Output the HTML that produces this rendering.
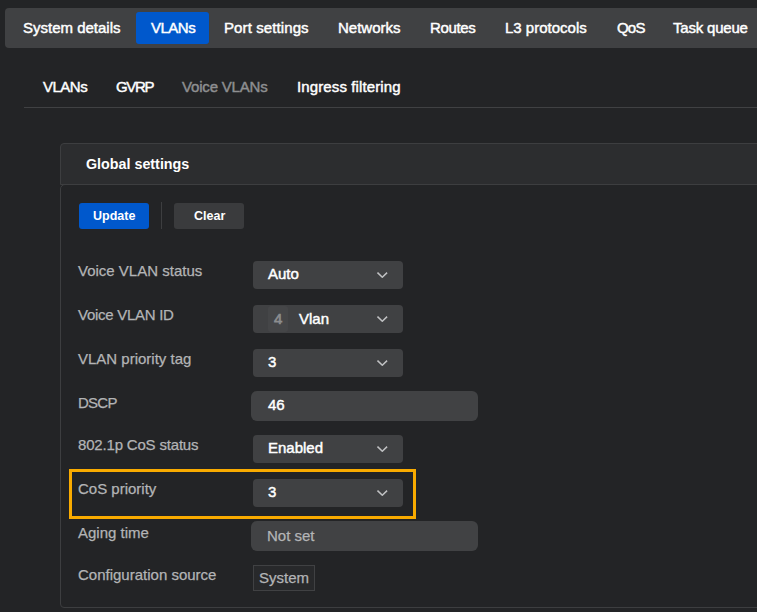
<!DOCTYPE html>
<html><head><meta charset="utf-8">
<style>
*{box-sizing:border-box;margin:0;padding:0}
html,body{width:757px;height:612px;overflow:hidden;background:#232426;font-family:"Liberation Sans",sans-serif;}
.a{position:absolute;white-space:nowrap;line-height:20px}
.nav{position:absolute;left:5px;top:8px;width:800px;height:40px;background:#404143;border-radius:4px}
.navsel{position:absolute;left:136px;top:12px;width:73px;height:32px;background:#0058cc;border-radius:3px}
.nt{font-size:15px;color:#fff;-webkit-text-stroke:0.45px #fff}
.st{font-size:15px;color:#fff;-webkit-text-stroke:0.45px}
.sub-line{position:absolute;left:24px;top:107px;width:760px;height:1px;background:#404143}
.chead{position:absolute;left:60px;top:143px;width:760px;height:42px;background:#2c2d2f;border:1px solid #3d3e40;border-radius:4px 0 0 0}
.cbody{position:absolute;left:60px;top:184px;width:760px;height:424px;border:1px solid #3d3e40;border-radius:5px 0 0 4px}
.btn{position:absolute;height:26px;border-radius:3px}
.lab{font-size:15px;color:#b3b4b6;-webkit-text-stroke:0.25px #b3b4b6}
.sel{position:absolute;left:253px;width:150px;height:28px;background:#404143;border-radius:4px}
.val{font-size:15px;color:#fff;-webkit-text-stroke:0.45px}
.inp{position:absolute;left:251px;width:227px;height:30px;background:#414244;border-radius:6px}
.chev{position:absolute;left:377px;width:11px;height:7px}
</style></head><body>
<div class="nav"></div>
<div class="navsel"></div>
<div class="a nt" style="left:23px;top:18px">System details</div>
<div class="a nt" style="left:151px;top:18px;letter-spacing:-0.5px">VLANs</div>
<div class="a nt" style="left:224px;top:18px;letter-spacing:0.1px">Port settings</div>
<div class="a nt" style="left:338px;top:18px">Networks</div>
<div class="a nt" style="left:430px;top:18px;letter-spacing:-0.35px">Routes</div>
<div class="a nt" style="left:505px;top:18px">L3 protocols</div>
<div class="a nt" style="left:617px;top:18px;letter-spacing:-0.8px">QoS</div>
<div class="a nt" style="left:673px;top:18px;letter-spacing:-0.2px">Task queue</div>

<div class="a st" style="left:43px;top:77px;letter-spacing:-0.5px">VLANs</div>
<div class="a st" style="left:116px;top:77px;letter-spacing:-1.3px">GVRP</div>
<div class="a st" style="left:182px;top:77px;color:#8e8f91;letter-spacing:-0.18px">Voice VLANs</div>
<div class="a st" style="left:297px;top:77px;letter-spacing:0.12px">Ingress filtering</div>
<div class="sub-line"></div>

<div class="cbody"></div>
<div class="chead"></div>
<div class="a" style="left:86px;top:154px;font-size:14.3px;font-weight:bold;color:#fff">Global settings</div>

<div class="btn" style="left:79px;top:203px;width:70px;background:#0058cc"></div>
<div class="a" style="left:93px;top:206px;font-size:12.5px;font-weight:bold;color:#fff">Update</div>
<div style="position:absolute;left:161px;top:202px;width:1px;height:27px;background:#3d3e40"></div>
<div class="btn" style="left:174px;top:203px;width:70px;background:#3a3b3d"></div>
<div class="a" style="left:194px;top:206px;font-size:12.5px;font-weight:bold;color:#fff">Clear</div>

<div class="a lab" style="left:78px;top:261px">Voice VLAN status</div>
<div class="sel" style="top:261px"></div>
<div class="a val" style="left:268px;top:264px">Auto</div>

<div class="a lab" style="left:78px;top:305px;letter-spacing:-0.28px">Voice VLAN ID</div>
<div class="sel" style="top:305px"></div>
<div style="position:absolute;left:268px;top:306px;width:20px;height:26px;background:#454648;border-radius:3px"></div>
<div class="a val" style="left:274px;top:309px;color:#8c8d8f;-webkit-text-stroke:0.7px #8c8d8f">4</div>
<div class="a val" style="left:299px;top:309px">Vlan</div>

<div class="a lab" style="left:78px;top:349px">VLAN priority tag</div>
<div class="sel" style="top:349px"></div>
<div class="a val" style="left:268px;top:352px">3</div>

<div class="a lab" style="left:78px;top:393px;letter-spacing:-0.75px">DSCP</div>
<div class="inp" style="top:391px"></div>
<div class="a val" style="left:268px;top:395px">46</div>

<div class="a lab" style="left:78px;top:435px;letter-spacing:-0.18px">802.1p CoS status</div>
<div class="sel" style="top:435px"></div>
<div class="a val" style="left:268px;top:438px">Enabled</div>

<div style="position:absolute;left:69px;top:469px;width:347px;height:50px;border:3px solid #f9ab00"></div>
<div class="a lab" style="left:78px;top:479px">CoS priority</div>
<div class="sel" style="top:479px"></div>
<div class="a val" style="left:268px;top:482px">3</div>

<div class="a lab" style="left:78px;top:523px">Aging time</div>
<div class="inp" style="top:521px"></div>
<div class="a lab" style="left:267px;top:526px">Not set</div>

<div class="a lab" style="left:78px;top:565px">Configuration source</div>
<div style="position:absolute;left:253px;top:565px;width:62px;height:26px;border:1px solid #404143;background:#28292b"></div>
<div class="a lab" style="left:259px;top:568px">System</div>

<svg class="chev" style="top:271px" viewBox="0 0 11 7"><path d="M0.5 1.6 L5.3 6.2 L10.1 1.6" fill="none" stroke="#c0c1c3" stroke-width="1.5"/></svg>
<svg class="chev" style="top:315px" viewBox="0 0 11 7"><path d="M0.5 1.6 L5.3 6.2 L10.1 1.6" fill="none" stroke="#c0c1c3" stroke-width="1.5"/></svg>
<svg class="chev" style="top:359px" viewBox="0 0 11 7"><path d="M0.5 1.6 L5.3 6.2 L10.1 1.6" fill="none" stroke="#c0c1c3" stroke-width="1.5"/></svg>
<svg class="chev" style="top:445px" viewBox="0 0 11 7"><path d="M0.5 1.6 L5.3 6.2 L10.1 1.6" fill="none" stroke="#c0c1c3" stroke-width="1.5"/></svg>
<svg class="chev" style="top:489px" viewBox="0 0 11 7"><path d="M0.5 1.6 L5.3 6.2 L10.1 1.6" fill="none" stroke="#c0c1c3" stroke-width="1.5"/></svg>
</body></html>
